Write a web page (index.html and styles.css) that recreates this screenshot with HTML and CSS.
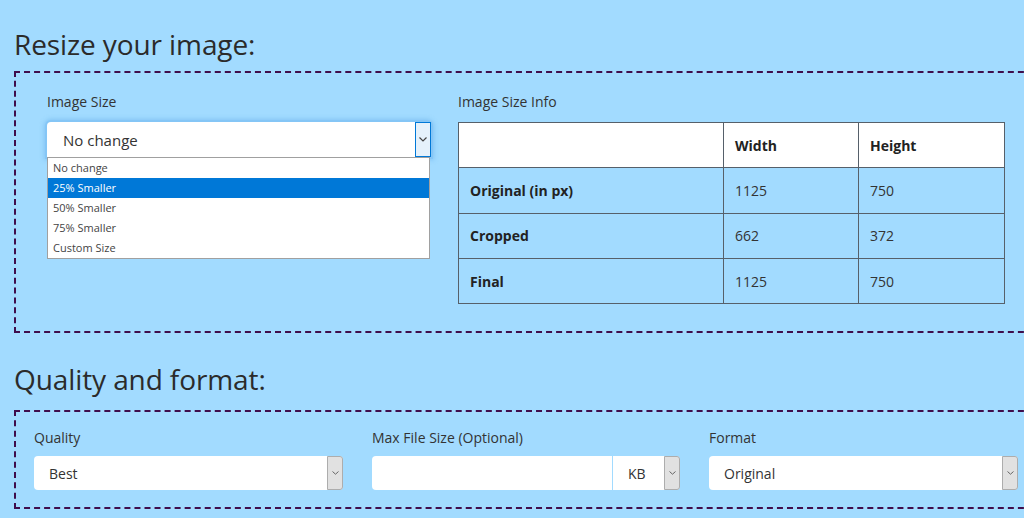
FILE: index.html
```html
<!DOCTYPE html>
<html lang="en">
<head>
  <meta charset="UTF-8">
  <title>Resize image</title>
  <link rel="stylesheet" href="styles.css">
</head>
<body>

<!-- Resize -->
<h2 class="section-heading">Resize your image:</h2>
<div class="dash-box resize-box">
  <div class="field size-field">
    <label class="field-label">Image Size</label>
    <div class="select select-open">
      <span class="select-text">No change</span>
      <span class="select-arrow">
        <svg width="8" height="5" viewBox="0 0 8 5"><path d="M0.5 0.5 L4 4 L7.5 0.5" fill="none" stroke="#444" stroke-width="1.2"/></svg>
      </span>
      <ul class="dropdown">
        <li>No change</li>
        <li class="active">25% Smaller</li>
        <li>50% Smaller</li>
        <li>75% Smaller</li>
        <li>Custom Size</li>
      </ul>
    </div>
  </div>

  <div class="field info-field">
    <label class="field-label">Image Size Info</label>
    <table class="info-table">
      <tr class="head-row">
        <th></th>
        <th>Width</th>
        <th>Height</th>
      </tr>
      <tr>
        <th>Original (in px)</th>
        <td>1125</td>
        <td>750</td>
      </tr>
      <tr>
        <th>Cropped</th>
        <td>662</td>
        <td>372</td>
      </tr>
      <tr>
        <th>Final</th>
        <td>1125</td>
        <td>750</td>
      </tr>
    </table>
  </div>
</div>

<!-- Quality -->
<h2 class="section-heading">Quality and format:</h2>
<div class="dash-box quality-box">
  <div class="field">
    <label class="field-label">Quality</label>
    <div class="select">
      <span class="select-text">Best</span>
      <span class="select-arrow gray">
        <svg width="7" height="4" viewBox="0 0 7 4"><path d="M0.5 0.5 L3.5 3.2 L6.5 0.5" fill="none" stroke="#666" stroke-width="1"/></svg>
      </span>
    </div>
  </div>
  <div class="field">
    <label class="field-label">Max File Size (Optional)</label>
    <div class="input-group">
      <div class="text-input"></div>
      <div class="select unit-select">
        <span class="select-text">KB</span>
        <span class="select-arrow gray">
          <svg width="7" height="4" viewBox="0 0 7 4"><path d="M0.5 0.5 L3.5 3.2 L6.5 0.5" fill="none" stroke="#666" stroke-width="1"/></svg>
        </span>
      </div>
    </div>
  </div>
  <div class="field">
    <label class="field-label">Format</label>
    <div class="select">
      <span class="select-text">Original</span>
      <span class="select-arrow gray">
        <svg width="7" height="4" viewBox="0 0 7 4"><path d="M0.5 0.5 L3.5 3.2 L6.5 0.5" fill="none" stroke="#666" stroke-width="1"/></svg>
      </span>
    </div>
  </div>
</div>

</body>
</html>
```

FILE: styles.css
```css
* {
  box-sizing: border-box;
  font-family: "Open Sans", "Noto Sans", sans-serif;
}
body {
  margin: 0;
  padding: 0 0 0 14px;
  background-color: #a2dbff;
  color: #333;
  overflow: hidden;
}
.section-heading {
  margin: 0;
  font-size: 28px;
  font-weight: normal;
  line-height: 36px;
  color: #2b2b2b;
  letter-spacing: -0.1px;
}
.section-heading:first-child {
  padding-top: 26px;
  margin-bottom: 9px;
}
.dash-box {
  border: 2px dashed #3f0d4c;
  width: 1040px;
}
.resize-box {
  display: grid;
  grid-template-columns: 384px 547px;
  column-gap: 27px;
  padding: 19px 0 27px 31px;
  margin-bottom: 28px;
}
.quality-box {
  display: grid;
  grid-template-columns: 309px 308px 309px;
  column-gap: 29px;
  padding: 16px 0 17px 18px;
  margin-top: 13px;
}
.field-label {
  display: block;
  font-size: 14px;
  line-height: 20px;
  margin-bottom: 8px;
}
.resize-box .field-label {
  margin-bottom: 10px;
}

/* SELECTS */
.select {
  position: relative;
  display: flex;
  align-items: center;
  height: 34px;
  background-color: #fff;
  border-radius: 4px;
  font-size: 14px;
  padding-left: 15px;
}
.select-text {
  flex: 1;
}
.select-arrow {
  display: flex;
  align-items: center;
  justify-content: center;
  width: 16px;
  align-self: stretch;
}
.select-arrow.gray {
  background-color: #e1e1e1;
  border: 1px solid #adadad;
  border-radius: 0 3px 3px 0;
}
.select-open {
  height: 35px;
  font-size: 15px;
  padding-left: 16px;
  border-radius: 4px 4px 0 0;
  box-shadow: 0 0 0 2px #85c6f6, 0 0 4px 3px rgba(102,175,233,0.5);
}
.select-open .select-arrow {
  background-color: #e5f1fb;
  border: 1px solid #0078d7;
}
.dropdown {
  position: absolute;
  top: 35px;
  left: 0;
  width: 383px;
  margin: 0;
  padding: 0;
  list-style: none;
  background-color: #fff;
  border: 1px solid #a0a0a0;
}
.dropdown li {
  height: 20px;
  line-height: 20px;
  font-size: 11px;
  padding-left: 5px;
  color: #444;
}
.dropdown li.active {
  background-color: #0078d7;
  color: #fff;
}

/* TABLE */
.info-table {
  border-collapse: collapse;
  width: 547px;
  font-size: 14px;
}
.info-table th,
.info-table td {
  border: 1px solid #56606a;
  height: 45.3px;
  padding: 0 11px;
  text-align: left;
}
.info-table th {
  font-weight: bold;
  color: #222;
}
.info-table th:first-child {
  width: 265px;
}
.info-table th:nth-child(2) {
  width: 135px;
}
.head-row {
  background-color: #fff;
}

/* MAX SIZE INPUT */
.input-group {
  display: flex;
  gap: 1px;
}
.text-input {
  flex: 1;
  height: 34px;
  background-color: #fff;
  border-radius: 4px 0 0 4px;
}
.unit-select {
  width: 67px;
  border-radius: 0 4px 4px 0;
}
```
